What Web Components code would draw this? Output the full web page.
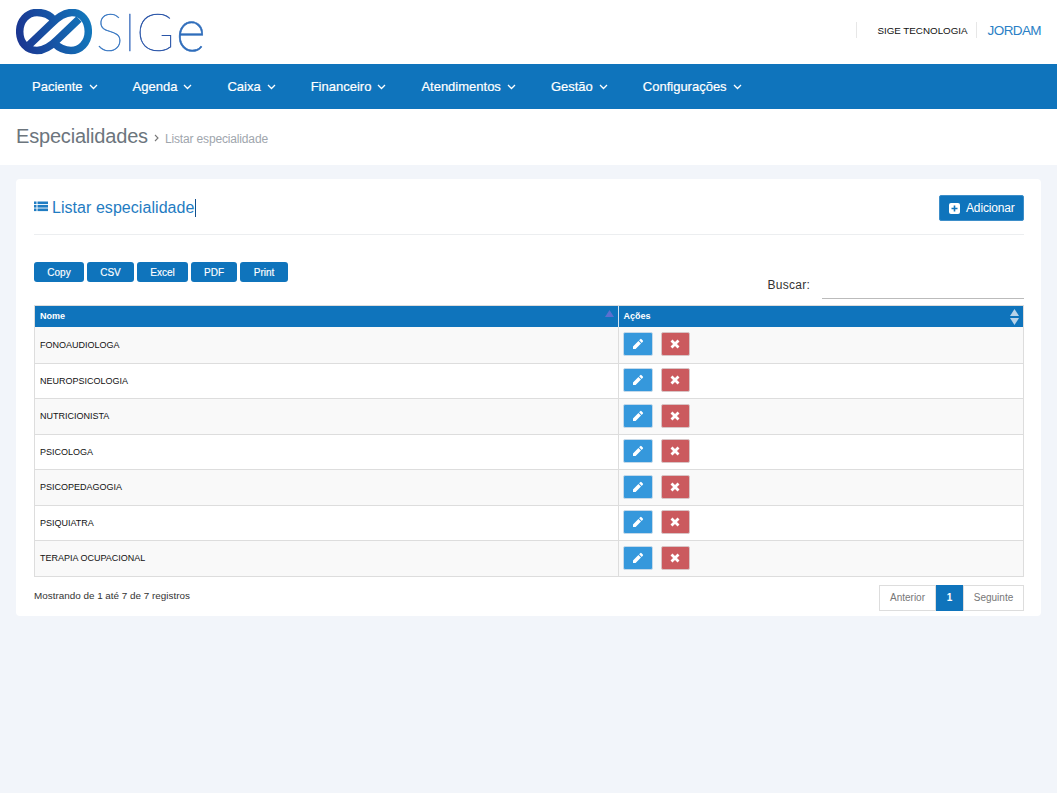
<!DOCTYPE html>
<html lang="pt-BR">
<head>
<meta charset="utf-8">
<title>Especialidades</title>
<style>
  body { margin: 0; background: #f2f5fa; font-family: "Liberation Sans", Arial, sans-serif; }
</style>
</head>
<body>
<sige-header></sige-header>
<sige-nav></sige-nav>
<sige-breadcrumb></sige-breadcrumb>
<sige-card>
  <specialty-table></specialty-table>
</sige-card>

<script>
// Top bar with logo and user info
class SigeHeader extends HTMLElement {
    constructor() {
        super();
        this.attachShadow({ mode: 'open' });
        this.shadowRoot.innerHTML = `
            <style>
                :host { display: flex; height: 64px; background: #fff; align-items: center; justify-content: space-between; padding: 0 16px; }
                .logo { display: flex; align-items: center; height: 64px; }
                .logo svg { display: block; }
                .word { font-family: Lato, sans-serif; font-weight: 100; font-size: 52px; line-height: 60px; margin: -1px 0 0 4px; white-space: nowrap; -webkit-text-stroke: 0.5px; color: #2f62b5; }
                .word .s { color: #3a78c2; -webkit-text-stroke-color: #3a78c2; }
                .word .i { color: #3a6cbc; -webkit-text-stroke-color: #3a6cbc; }
                .word .g { color: #2a55a8; -webkit-text-stroke-color: #2a55a8; }
                .word .e { font-family: Roboto, sans-serif; color: #2f6dbb; -webkit-text-stroke-color: #2f6dbb; font-size: 56px; line-height: 60px; margin-left: 2px; }
                .user { display: flex; align-items: center; font-size: 9.800px; margin-top: -4px; }
                .org { border-left: 1px solid #e7e7e7; border-right: 1px solid #e7e7e7; padding: 0 8px 0 20px; height: 16px; line-height: 18px; color: #111; }
                .name { color: #2a7fc6; font-size: 13.500px; padding-left: 11px; letter-spacing: -0.6px; }
            </style>
            <div class="logo">
                <svg width="76" height="46" viewBox="16 9 76 46" fill="none">
                    <defs>
                        <linearGradient id="lg" gradientUnits="userSpaceOnUse" x1="16" y1="40" x2="92" y2="24">
                            <stop offset="0" stop-color="#1b3490"/>
                            <stop offset=".5" stop-color="#1656a6"/>
                            <stop offset="1" stop-color="#1279bd"/>
                        </linearGradient>
                    </defs>
                    <g stroke="url(#lg)" stroke-width="7.500">
                        <path d="M29 45 L51 24 C58 17 64 12.500 72 12.500 C82 12.500 88.300 21 88.300 31.500 C88.300 43 80 50.500 71 50.500 C63 50.500 58 47 54 43"/>
                        <path d="M79 19 L57 40 C50 47 44 50.500 37 50.500 C27 50.500 19.700 43 19.700 31.500 C19.700 21 27 12.500 37 12.500 C45 12.500 50 15 54 20"/>
                    </g>
                </svg>
                <div class="word"><span class="s">S</span><span class="i">I</span><span class="g">G</span><span class="e">e</span></div>
            </div>
            <div class="user">
                <span class="org">SIGE TECNOLOGIA</span>
                <span class="name">JORDAM</span>
            </div>
        `;
    }
}

// Main navigation bar
class SigeNav extends HTMLElement {
    constructor() {
        super();
        this.attachShadow({ mode: 'open' });
        const items = ['Paciente', 'Agenda', 'Caixa', 'Financeiro', 'Atendimentos', 'Gestão', 'Configurações'];
        this.shadowRoot.innerHTML = `
            <style>
                :host { display: flex; height: 45px; background: #0f74bc; padding-left: 32px; gap: 35px; align-items: center; }
                .item { display: flex; align-items: center; gap: 6px; color: #fff; font-size: 13px; -webkit-text-stroke: 0.2px #fff; }
                svg { display: block; margin-top: 1px; }
            </style>
            ${items.map(item => `
                <div class="item">${item}
                    <svg width="9" height="6" viewBox="0 0 9 6" fill="none" stroke="#fff" stroke-width="1.300"><polyline points="1 1 4.500 4.500 8 1"></polyline></svg>
                </div>
            `).join('')}
        `;
    }
}

// Page title strip
class SigeBreadcrumb extends HTMLElement {
    constructor() {
        super();
        this.attachShadow({ mode: 'open' });
        this.shadowRoot.innerHTML = `
            <style>
                :host { display: flex; height: 56px; background: #fff; padding: 0 16px 2px; box-sizing: border-box; align-items: center; }
                h1 { margin: 0; font-size: 20px; font-weight: 400; color: #6c757d; letter-spacing: -0.19px; }
                svg { margin: 3px 6px 0 6px; display: block; }
                span { font-size: 12px; color: #a0a6ad; letter-spacing: -0.15px; margin-top: 5px; }
            </style>
            <h1>Especialidades</h1>
            <svg width="5" height="8" viewBox="0 0 5 8" fill="none" stroke="#777" stroke-width="1.100"><polyline points="1 1 4 4 1 7"></polyline></svg>
            <span>Listar especialidade</span>
        `;
    }
}

// White portlet with title and add button
class SigeCard extends HTMLElement {
    constructor() {
        super();
        this.attachShadow({ mode: 'open' });
        this.shadowRoot.innerHTML = `
            <style>
                :host { display: block; margin: 14px 16px 0; background: #fff; border-radius: 4px; padding: 16px 17px 5px 18px; height: 437px; box-sizing: border-box; }
                .title { display: flex; justify-content: space-between; align-items: flex-start; height: 39px; border-bottom: 1px solid #eceef0; }
                h2 { margin: 0; display: flex; align-items: center; gap: 4px; height: 26px; font-size: 16px; font-weight: 400; color: #1f7cc2; line-height: 24px; letter-spacing: 0.05px; }
                h2 svg { display: block; margin-top: -2px; }
                h2 i { display: inline-block; width: 1px; height: 18px; background: #10508f; margin-left: -3.500px; }
                button { display: flex; align-items: center; gap: 6px; height: 26px; width: 85px; padding: 0 0 0 9px; box-sizing: border-box; background: #0f74bc; border: 1px solid #3d8ec9; border-radius: 2px; color: #fff; font: 12px "Liberation Sans", Arial, sans-serif; letter-spacing: -0.15px; }
            </style>
            <div class="title">
                <h2>
                    <svg width="14" height="12" viewBox="0 0 14 12" fill="#1f7cc2"><rect x="0" y="0.500" width="2.500" height="2.600"/><rect x="3.500" y="0.500" width="10.500" height="2.600"/><rect x="0" y="4" width="2.500" height="2.600"/><rect x="3.500" y="4" width="10.500" height="2.600"/><rect x="0" y="7.500" width="2.500" height="2.600"/><rect x="3.500" y="7.500" width="10.500" height="2.600"/></svg>
                    Listar especialidade<i></i>
                </h2>
                <button>
                    <svg width="11" height="11" viewBox="0 0 11 11"><rect width="11" height="11" rx="2" fill="#fff"/><path d="M5.500 2.500v6M2.500 5.500h6" stroke="#0f74bc" stroke-width="1.600"/></svg>
                    Adicionar
                </button>
            </div>
            <slot></slot>
        `;
    }
}

// Toolbar, search, table and pagination
class SpecialtyTable extends HTMLElement {
    constructor() {
        super();
        this.attachShadow({ mode: 'open' });
        const rows = ['FONOAUDIOLOGA', 'NEUROPSICOLOGIA', 'NUTRICIONISTA', 'PSICOLOGA', 'PSICOPEDAGOGIA', 'PSIQUIATRA', 'TERAPIA OCUPACIONAL'];
        const exportsList = [['Copy', 50], ['CSV', 47], ['Excel', 51], ['PDF', 46], ['Print', 48]];
        this.shadowRoot.innerHTML = `
            <style>
                :host { display: block; font-family: "Liberation Sans", Arial, sans-serif; }
                .toolbar { display: flex; justify-content: space-between; height: 43px; margin-top: 27px; }
                .exports { display: flex; gap: 3px; align-items: flex-start; }
                .exports span { display: flex; align-items: center; justify-content: center; height: 20px; background: #0f74bc; color: #fff; font-size: 10px; border-radius: 3px; -webkit-text-stroke: 0.15px #fff; }
                .search { display: flex; align-items: flex-end; gap: 12px; height: 37px; font-size: 12px; color: #333; }
                .search label { padding-bottom: 7px; letter-spacing: 0.25px; }
                .search div { width: 202px; height: 36px; box-sizing: border-box; border-bottom: 1px solid #bbb; }
                .table { border: 1px solid #ddd; border-bottom: 0; }
                .row { display: grid; grid-template-columns: 582.500px 1fr; height: 35.500px; box-sizing: border-box; border-bottom: 1px solid #ddd; font-size: 9px; color: #111; }
                .row:nth-child(even) { background: #f9f9f9; }
                .row:nth-child(2) { height: 36.500px; }
                .row > div { display: flex; align-items: center; padding-left: 5px; }
                .row > div + div { border-left: 1px solid #ddd; gap: 8px; padding-left: 4px; padding-bottom: 1px; }
                .head { height: 21px; background: #0f74bc; color: #fff; font-weight: 700; border-bottom: 0; }
                .head > div { justify-content: space-between; padding-right: 4px; padding-bottom: 2px; }
                .head > div + div { border-left: 1px solid #d5e5f2; padding-left: 5px; padding-bottom: 0; }
                .head span { margin-top: -2px; }
                .btn { display: flex; align-items: center; justify-content: center; height: 24px; box-sizing: border-box; border-radius: 2px; border: 1px solid #c4d9ea; }
                .edit { width: 30px; background: #3598dc; }
                .del { width: 29px; background: #cb5a5e; border-color: #d8c4c5; }
                .foot { display: flex; justify-content: space-between; margin-top: 8px; }
                .info { font-size: 9.900px; color: #333; padding-top: 5px; }
                .pages { display: flex; height: 26px; font-size: 10px; color: #777; }
                .pages span { display: flex; align-items: center; justify-content: center; box-sizing: border-box; border: 1px solid #ddd; }
                .pages .on { background: #0f74bc; border-color: #0f74bc; color: #fff; font-weight: 700; width: 27px; }
            </style>
            <div class="toolbar">
                <div class="exports">
                    ${exportsList.map(e => `<span style="width:${e[1]}px">${e[0]}</span>`).join('')}
                </div>
                <div class="search"><label>Buscar:</label><div></div></div>
            </div>
            <div class="table">
                <div class="row head">
                    <div>Nome
                        <svg width="9" height="7" viewBox="0 0 9 7" style="margin-top:-4px"><path d="M4.500 0L9 7H0z" fill="#5c6fcf"/></svg>
                    </div>
                    <div><span>Ações</span>
                        <svg width="9" height="16" viewBox="0 0 9 16" fill="#b9d3e8"><path d="M4.500 0L9 7H0z"/><path d="M4.500 16L9 9H0z"/></svg>
                    </div>
                </div>
                ${rows.map(name => `
                    <div class="row">
                        <div>${name}</div>
                        <div>
                            <span class="btn edit"><svg width="12" height="12" viewBox="0 0 12 12" fill="#fff"><path d="M8.200 1.200a1 1 0 0 1 1.400 0l1.200 1.200a1 1 0 0 1 0 1.400L9.700 4.900 7.100 2.300zM6.400 3l2.600 2.600-5.400 5.400H1v-2.600z"/></svg></span>
                            <span class="btn del"><svg width="10" height="10" viewBox="0 0 10 10" stroke="#fff" stroke-width="2.800"><path d="M1.500 1.500l7 7M8.500 1.500l-7 7"/></svg></span>
                        </div>
                    </div>
                `).join('')}
            </div>
            <div class="foot">
                <div class="info">Mostrando de 1 até 7 de 7 registros</div>
                <div class="pages">
                    <span style="width:57px">Anterior</span>
                    <span class="on">1</span>
                    <span style="width:61px">Seguinte</span>
                </div>
            </div>
        `;
    }
}

customElements.define('sige-header', SigeHeader);
customElements.define('sige-nav', SigeNav);
customElements.define('sige-breadcrumb', SigeBreadcrumb);
customElements.define('sige-card', SigeCard);
customElements.define('specialty-table', SpecialtyTable);
</script>
</body>
</html>
